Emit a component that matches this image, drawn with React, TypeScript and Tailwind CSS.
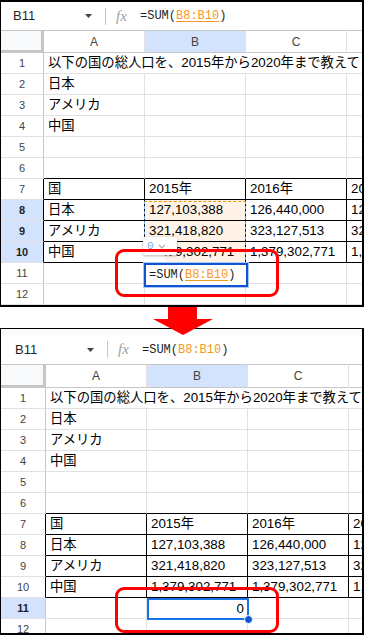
import React from "react";

const rows: string[][] = [
  ["以下の国の総人口を、2015年から2020年まで教えてください。"],
  ["日本"],
  ["アメリカ"],
  ["中国"],
  [],
  [],
  ["国", "2015年", "2016年", "2017年"],
  ["日本", "127,103,388", "126,440,000", "125,502,000"],
  ["アメリカ", "321,418,820", "323,127,513", "325,719,178"],
  ["中国", "1,379,302,771", "1,379,302,771", "1,386,395,000"],
  [],
  [],
];

const cols = ["A", "B", "C", "D"];

function Toolbar({ after }: { after: boolean }) {
  return (
    <div className={"flex items-center bg-white " + (after ? "h-[29px]" : "h-[28px]")}>
      <div className={"text-[13px] text-[#1f1f1f] " + (after ? "w-[86px] pl-[14px]" : "w-[84px] pl-[12px]")}>B11</div>
      <svg width="7" height="4" viewBox="0 0 7 4" className="shrink-0">
        <path d="M0 0h7L3.5 4z" fill="#444" />
      </svg>
      <div className="ml-[13px] w-px h-[17px] bg-[#c7c7c7]" />
      <div className="ml-[10px] w-[14px] text-[15px] leading-none italic text-[#a0a0a0] font-['Liberation_Serif',serif]">fx</div>
      <div className="ml-[10px] text-[12px] font-['Liberation_Mono',monospace] text-[#1f1f1f] whitespace-nowrap">
        =SUM(
        <span className={"text-[#f7981d] " + (after ? "" : "underline underline-offset-2")}>B8:B10</span>)
      </div>
    </div>
  );
}

function Sheet({ after }: { after: boolean }) {
  const selRows = after ? [11] : [8, 9, 10];
  return (
    <div
      className={
        "grid overflow-hidden " +
        (after
          ? "grid-cols-[45px_101px_101px_101px_101px] grid-rows-[24px_repeat(12,21px)]"
          : "grid-cols-[43px_101px_101px_101px_101px] grid-rows-[23px_repeat(12,21px)]")
      }
    >
      <div className="bg-[#f8f9fa] border-t border-t-[#c7c7c7] border-r-[3px] border-b-[3px] border-[#c4c7c5]" />
      {cols.map((c) => (
        <div
          key={c}
          className={
            "flex items-center justify-center text-[12px] text-[#444] border-t border-t-[#c7c7c7] border-r border-r-[#e1e1e1] border-b border-b-[#c7c7c7] " +
            (c === "B" ? "bg-[#d3e3fd] text-[#1f1f1f]" : "bg-white")
          }
        >
          {c}
        </div>
      ))}
      {rows.map((cells, i) => {
        const n = i + 1;
        const table = n >= 7 && n <= 10;
        const hl = selRows.includes(n);
        return (
          <React.Fragment key={n}>
            <div
              className={
                "flex items-center justify-center text-[11px] border-b border-b-[#e1e1e1] border-r " +
                (table ? "border-r-black " : "border-r-[#c7c7c7] ") +
                (hl ? "bg-[#d3e3fd] font-bold text-[#1f1f1f]" : "bg-white text-[#444]")
              }
            >
              {n}
            </div>
            {n === 1 ? (
              <div className="col-span-4 flex items-center px-[4px] text-[13.33px] text-black whitespace-nowrap overflow-hidden border-b border-b-[#e1e1e1]">
                {cells[0]}
              </div>
            ) : (
              cols.map((c, j) => {
                const txt = cells[j] ?? "";
                const range = !after && c === "B" && n >= 8 && n <= 10;
                return (
                  <div
                    key={c}
                    className={
                      "flex items-center px-[4px] text-[13.33px] text-black whitespace-nowrap overflow-hidden border-r border-b " +
                      (table ? "border-r-black border-b-black " : "border-r-[#e1e1e1] " + (n === 6 ? "border-b-black " : "border-b-[#e1e1e1] ")) +
                      (range ? "bg-[#fef3e6]" : "bg-white")
                    }
                  >
                    {txt}
                  </div>
                );
              })
            )}
          </React.Fragment>
        );
      })}
    </div>
  );
}

function Before() {
  return (
    <div className="relative h-[307px] w-[364px] overflow-hidden border-black border-t-2 border-r-2 border-b-2 border-l bg-white">
      <Toolbar after={false} />
      <Sheet after={false} />
      {/* copied range */}
      <div className="absolute left-[143px] top-[199px] w-[102px] h-[64px] border border-dashed border-[#f29900] border-l-[#7cacf8] pointer-events-none" />
      {/* tooltip */}
      <div className="absolute left-[142px] top-[251px] w-[22px] h-[10px] bg-white" />
      <div className="absolute left-[142px] top-[235px] w-[34px] h-[18px] bg-white rounded-[2px] shadow-[0_1px_3px_rgba(0,0,0,0.3)] flex items-center pl-[4px] gap-[4px]">
        <span className="text-[11px] font-['Liberation_Mono',monospace] text-[#7aa7ee]">0</span>
        <svg width="8" height="5" viewBox="0 0 8 5">
          <path d="M1 1l3 3 3-3" fill="none" stroke="#b0b0b0" strokeWidth="1.2" />
        </svg>
      </div>
      {/* editor */}
      <div className="absolute left-[142px] top-[260px] w-[106px] h-[26px] border border-[#a8c7fa] bg-white">
        <div className="h-full border-2 border-[#1155cc] flex items-center pl-[3px] text-[12px] font-['Liberation_Mono',monospace] text-[#1f1f1f] whitespace-nowrap">
          =SUM(<span className="text-[#f7981d] underline underline-offset-2">B8:B10</span>)
        </div>
      </div>
      <div className="absolute left-[114px] top-[247px] w-[164px] h-[48px] border-[3px] border-[#ff0000] rounded-[9px] pointer-events-none" />
    </div>
  );
}

function After() {
  return (
    <div className="relative h-[307px] w-[364px] overflow-hidden border-black border-t border-r-2 border-b-2 border-l bg-white">
      <div className="h-[6px] bg-[#f9fbfd]" />
      <Toolbar after />
      <Sheet after />
      <div className="absolute left-[146px] top-[269px] w-[102px] h-[22px] border-2 border-[#1a73e8] flex items-center justify-end pr-[3px] text-[13.33px] text-black">
        0
      </div>
      <div className="absolute left-[243px] top-[286px] w-[9px] h-[9px] rounded-full bg-[#0b57d0] border border-white" />
      <div className="absolute left-[114px] top-[258px] w-[164px] h-[46px] border-[3px] border-[#ff0000] rounded-[9px] pointer-events-none" />
    </div>
  );
}

export default function App() {
  return (
    <div className="w-[365px] h-[635px] bg-white font-['Liberation_Sans','Noto_Sans_CJK_JP',sans-serif] overflow-hidden">
      <Before />
      <div className="relative h-[21px] z-10">
        <svg className="absolute left-[153px] top-0" width="60" height="28" viewBox="0 0 60 28">
          <rect x="15" y="-1" width="29" height="13" fill="#ff0000" />
          <path d="M0 12h60L30 28z" fill="#ff0000" />
        </svg>
      </div>
      <After />
    </div>
  );
}
